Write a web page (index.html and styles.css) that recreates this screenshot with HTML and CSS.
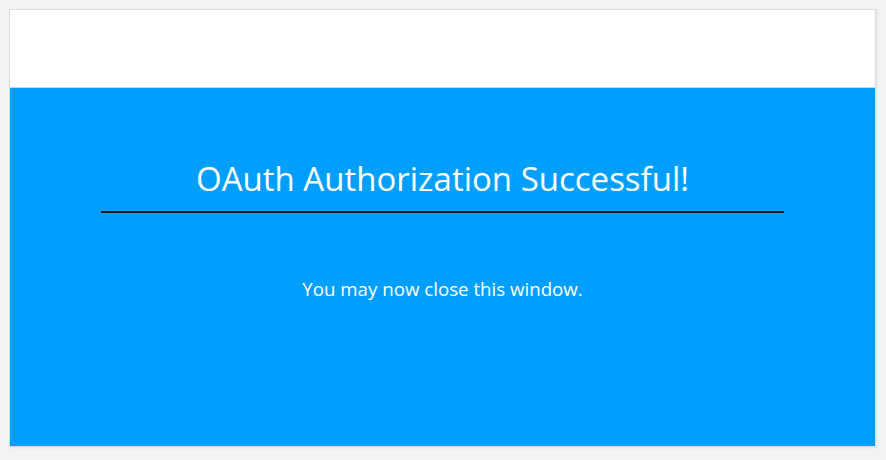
FILE: index.html
```html
<!DOCTYPE html>
<html lang="en">
<head>
    <meta charset="UTF-8">
    <meta name="viewport" content="width=device-width, initial-scale=1.0">
    <title>OAuth Authorization</title>
    <link rel="stylesheet" href="styles.css">
</head>
<body>
    <div class="frame">
        <div class="header"></div>
        <div class="content">
            <h1 class="title">OAuth Authorization Successful!</h1>
            <hr class="divider">
            <p class="message">You may now close this window.</p>
        </div>
    </div>
</body>
</html>
```

FILE: styles.css
```css
body {
    font-family: "Open Sans", "Noto Sans", sans-serif;
    background-color: #f3f3f3;
    margin: 0;
    padding: 9px 10px 13px 9px;
}
.frame {
    border: 1px solid #dcdcdc;
    box-shadow: 1px 1px 2px rgba(0, 0, 0, 0.08);
    background-color: #ffffff;
}
.header {
    height: 77px;
    background-color: #ffffff;
    border-bottom: 1px solid #d0d0d0;
}
.content {
    background-color: #009ffd;
    color: #ffffff;
    height: 358px;
    padding-top: 69px;
    box-sizing: border-box;
    text-align: center;
}
.title {
    font-size: 33px;
    font-weight: normal;
    margin: 0;
    line-height: 44px;
}
.divider {
    margin: 10px 91px 0 91px;
    border: none;
    border-top: 2px solid #1a1a1a;
}
.message {
    font-size: 18.7px;
    margin: 63px 0 0 0;
}
```
